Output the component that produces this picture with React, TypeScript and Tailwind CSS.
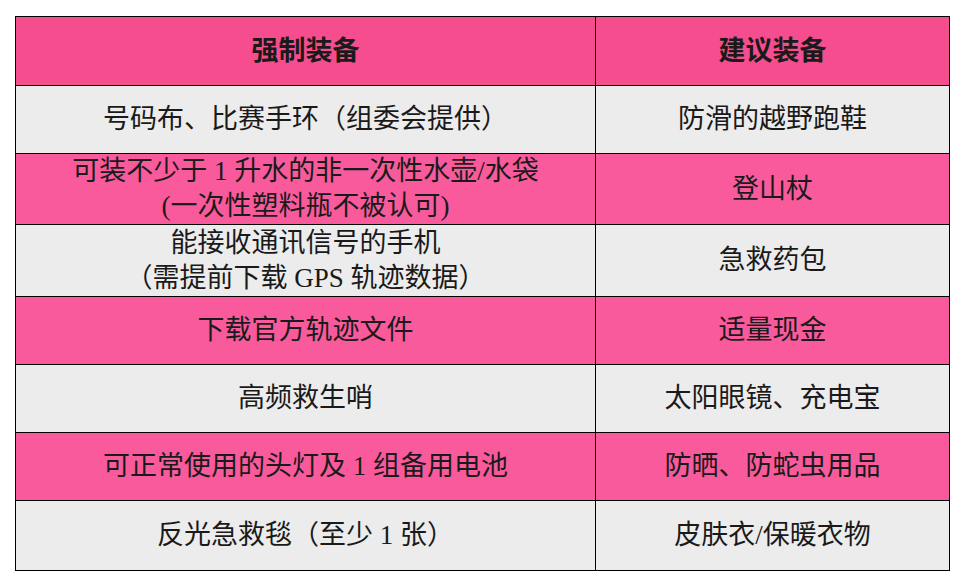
import React from "react";

const rows: { l: string[]; r: string; pink: boolean; h: number }[] = [
  { l: ["号码布、比赛手环（组委会提供）"], r: "防滑的越野跑鞋", pink: false, h: 68 },
  { l: ["可装不少于 1 升水的非一次性水壶/水袋", "(一次性塑料瓶不被认可)"], r: "登山杖", pink: true, h: 71 },
  { l: ["能接收通讯信号的手机", "（需提前下载 GPS 轨迹数据）"], r: "急救药包", pink: false, h: 72 },
  { l: ["下载官方轨迹文件"], r: "适量现金", pink: true, h: 68 },
  { l: ["高频救生哨"], r: "太阳眼镜、充电宝", pink: false, h: 68 },
  { l: ["可正常使用的头灯及 1 组备用电池"], r: "防晒、防蛇虫用品", pink: true, h: 68 },
  { l: ["反光急救毯（至少 1 张）"], r: "皮肤衣/保暖衣物", pink: false, h: 70 },
];

export default function App() {
  return (
    <div
      className="w-[962px] h-[581px] bg-white pt-[16px] pl-[15px]"
      style={{ fontFamily: '"Liberation Serif", "Noto Sans CJK SC", serif' }}
    >
      <table className="border-collapse table-fixed w-[934px] text-[27px] text-[#1a1a1a]">
        <colgroup>
          <col className="w-[580px]" />
          <col className="w-[354px]" />
        </colgroup>
        <thead>
          <tr className="h-[69px] bg-[#f54d8d]">
            <th className="border border-black text-center font-bold text-[27px] p-0">强制装备</th>
            <th className="border border-black text-center font-bold text-[27px] p-0">建议装备</th>
          </tr>
        </thead>
        <tbody>
          {rows.map((r, i) => (
            <tr
              key={i}
              className={r.pink ? "bg-[#f85a9c]" : "bg-[#ececec]"}
              style={{ height: r.h }}
            >
              <td className="border border-black text-center p-0 leading-[35px]">
                {r.l.map((t, j) => (
                  <div key={j}>{t}</div>
                ))}
              </td>
              <td className="border border-black text-center p-0 leading-[35px]">{r.r}</td>
            </tr>
          ))}
        </tbody>
      </table>
    </div>
  );
}
